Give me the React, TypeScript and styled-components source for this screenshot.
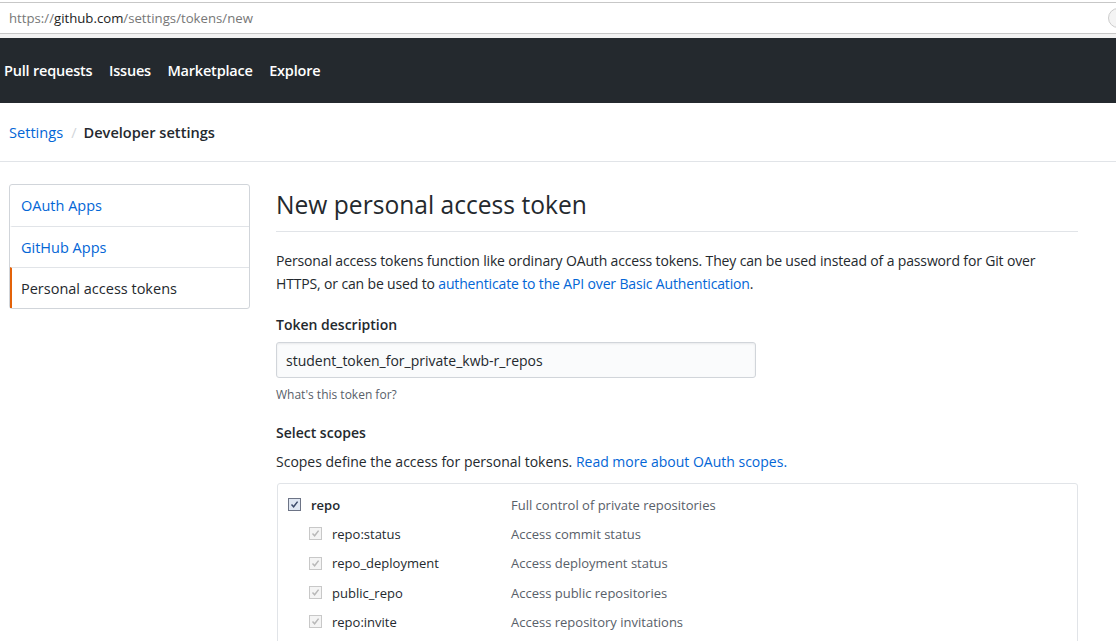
import React, { FC } from 'react'
import styled, { createGlobalStyle } from 'styled-components'

const GlobalStyle = createGlobalStyle`
  html, body {
    margin: 0;
    padding: 0;
    background: #fff;
    overflow: hidden;
  }
  body {
    font-family: "Open Sans", "Noto Sans", "Liberation Sans", sans-serif;
    color: #24292e;
    font-size: 14px;
  }
  * { box-sizing: border-box; }
`

interface scope {
  name: string,
  description: string,
  child?: boolean,
}

const scopes: scope[] = [
  { name: 'repo', description: 'Full control of private repositories' },
  { name: 'repo:status', description: 'Access commit status', child: true },
  { name: 'repo_deployment', description: 'Access deployment status', child: true },
  { name: 'public_repo', description: 'Access public repositories', child: true },
  { name: 'repo:invite', description: 'Access repository invitations', child: true },
]

const CheckMark: FC<{ muted?: boolean }> = ({ muted }) => (
  <svg width="9" height="9" viewBox="0 0 9 9">
    <path
      d="M1.5 4.6 L3.6 6.8 L7.6 1.6"
      fill="none"
      stroke={muted ? '#b8b8b8' : '#3c4a6a'}
      strokeWidth="1.5"
    />
  </svg>
)

const App: FC = () => (
  <>
    <GlobalStyle />
    <UrlBar>
      <Url>
        https://<strong>github.com</strong>/settings/tokens/new
      </Url>
      <UrlButton />
    </UrlBar>
    <UrlGap />
    <Header>
      <NavItem>Pull requests</NavItem>
      <NavItem>Issues</NavItem>
      <NavItem>Marketplace</NavItem>
      <NavItem>Explore</NavItem>
    </Header>
    <Breadcrumb>
      <Crumb href="#">Settings</Crumb>
      <Separator>/</Separator>
      <Current>Developer settings</Current>
    </Breadcrumb>
    <Layout>
      <Menu>
        <MenuItem>OAuth Apps</MenuItem>
        <MenuItem>GitHub Apps</MenuItem>
        <MenuItem selected>Personal access tokens</MenuItem>
      </Menu>
      <Main>
        <Title>New personal access token</Title>
        <Lead>
          Personal access tokens function like ordinary OAuth access tokens. They can be used instead of a password for Git over
          HTTPS, or can be used to <TextLink href="#">authenticate to the API over Basic Authentication</TextLink>.
        </Lead>
        <Label>Token description</Label>
        <Input defaultValue="student_token_for_private_kwb-r_repos" />
        <Note>What's this token for?</Note>
        <Label>Select scopes</Label>
        <ScopeLead>
          Scopes define the access for personal tokens. <TextLink href="#">Read more about OAuth scopes.</TextLink>
        </ScopeLead>
        <ScopeBox>
          {scopes.map((s) => (
            <ScopeRow key={s.name}>
              <ScopeName child={s.child}>
                <Box muted={s.child}>
                  <CheckMark muted={s.child} />
                </Box>
                {s.name}
              </ScopeName>
              <ScopeDesc>{s.description}</ScopeDesc>
            </ScopeRow>
          ))}
        </ScopeBox>
      </Main>
    </Layout>
  </>
)

const UrlBar = styled.div`
  height: 32px;
  margin-top: 2px;
  border-top: 1px solid #c7c7c7;
  border-bottom: 1px solid #c7c7c7;
  background: #fff;
  display: flex;
  align-items: center;
  justify-content: space-between;
  padding-left: 9px;
`
const Url = styled.div`
  font-size: 13.2px;
  color: #777;
  strong {
    font-weight: normal;
    color: #222;
  }
`
const UrlButton = styled.div`
  width: 20px;
  height: 20px;
  border-radius: 50%;
  border: 1px solid #ccc;
  background: #f4f4f4;
  margin-right: -12px;
`
const UrlGap = styled.div`
  height: 4px;
  background: #f2f2f2;
`
const Header = styled.header`
  height: 65px;
  background: #24292e;
  display: flex;
  align-items: center;
  padding-left: 4px;
  gap: 16.5px;
`
const NavItem = styled.a`
  color: #fff;
  font-size: 14.5px;
  font-weight: 600;
  letter-spacing: -0.2px;
`
const Breadcrumb = styled.nav`
  height: 59px;
  border-bottom: 1px solid #e1e4e8;
  display: flex;
  align-items: center;
  padding-left: 9px;
  font-size: 14.6px;
`
const Crumb = styled.a`
  color: #0366d6;
  text-decoration: none;
`
const Separator = styled.span`
  color: #d1d5da;
  margin: 0 7px 0 8px;
`
const Current = styled.span`
  font-weight: 600;
  color: #24292e;
`
const Layout = styled.div`
  display: flex;
  padding: 22px 0 0 9px;
  gap: 26px;
`
const Menu = styled.div`
  width: 241px;
  flex-shrink: 0;
  align-self: flex-start;
  border: 1px solid #d1d5da;
  border-radius: 3px;
`
const MenuItem = styled.div<{ selected?: boolean }>`
  height: 41px;
  display: flex;
  align-items: center;
  padding-left: 9px;
  font-size: 14.5px;
  color: ${(p) => (p.selected ? '#24292e' : '#0366d6')};
  border-left: 2px solid ${(p) => (p.selected ? '#e36209' : 'transparent')};
  & + & {
    border-top: 1px solid #e1e4e8;
  }
`
const Main = styled.main`
  width: 802px;
  flex-shrink: 0;
`
const Title = styled.h2`
  margin: 0;
  font-size: 24.6px;
  font-weight: 400;
  line-height: 42px;
  padding-bottom: 5px;
  border-bottom: 1px solid #e1e4e8;
`
const Lead = styled.p`
  margin: 17px 0 0;
  font-size: 14px;
  line-height: 23px;
  letter-spacing: -0.15px;
`
const TextLink = styled.a`
  color: #0366d6;
  text-decoration: none;
`
const Label = styled.div`
  margin-top: 19px;
  font-weight: 600;
  font-size: 14px;
  line-height: 22px;
`
const Input = styled.input`
  display: block;
  margin-top: 6px;
  width: 480px;
  height: 36px;
  padding: 0 9px;
  font-family: inherit;
  font-size: 14px;
  color: #24292e;
  background: #fafbfc;
  border: 1px solid #d1d5da;
  border-radius: 3px;
  box-shadow: inset 0 1px 2px rgba(27, 31, 35, 0.075);
`
const Note = styled.div`
  margin-top: 8px;
  font-size: 12px;
  color: #586069;
`
const ScopeLead = styled.p`
  margin: 7px 0 0;
  font-size: 14px;
  line-height: 22px;
`
const ScopeBox = styled.div`
  margin-top: 10px;
  margin-left: 1px;
  border: 1px solid #e1e4e8;
  border-radius: 3px;
  padding: 6px 0 40px 10px;
`
const ScopeRow = styled.div`
  display: flex;
  align-items: center;
  height: 29.3px;
`
const ScopeName = styled.div<{ child?: boolean }>`
  width: 223px;
  display: flex;
  align-items: center;
  gap: 10px;
  padding-left: ${(p) => (p.child ? '21px' : '0')};
  font-size: 13px;
  font-weight: ${(p) => (p.child ? 400 : 600)};
  color: #24292e;
`
const Box = styled.span<{ muted?: boolean }>`
  width: 13px;
  height: 13px;
  display: inline-flex;
  align-items: center;
  justify-content: center;
  border: 1px solid ${(p) => (p.muted ? '#c8c8c8' : '#6d7486')};
  background: ${(p) => (p.muted ? '#f4f4f4' : '#dfe6f2')};
`
const ScopeDesc = styled.div`
  font-size: 13px;
  color: #586069;
`

export default App
